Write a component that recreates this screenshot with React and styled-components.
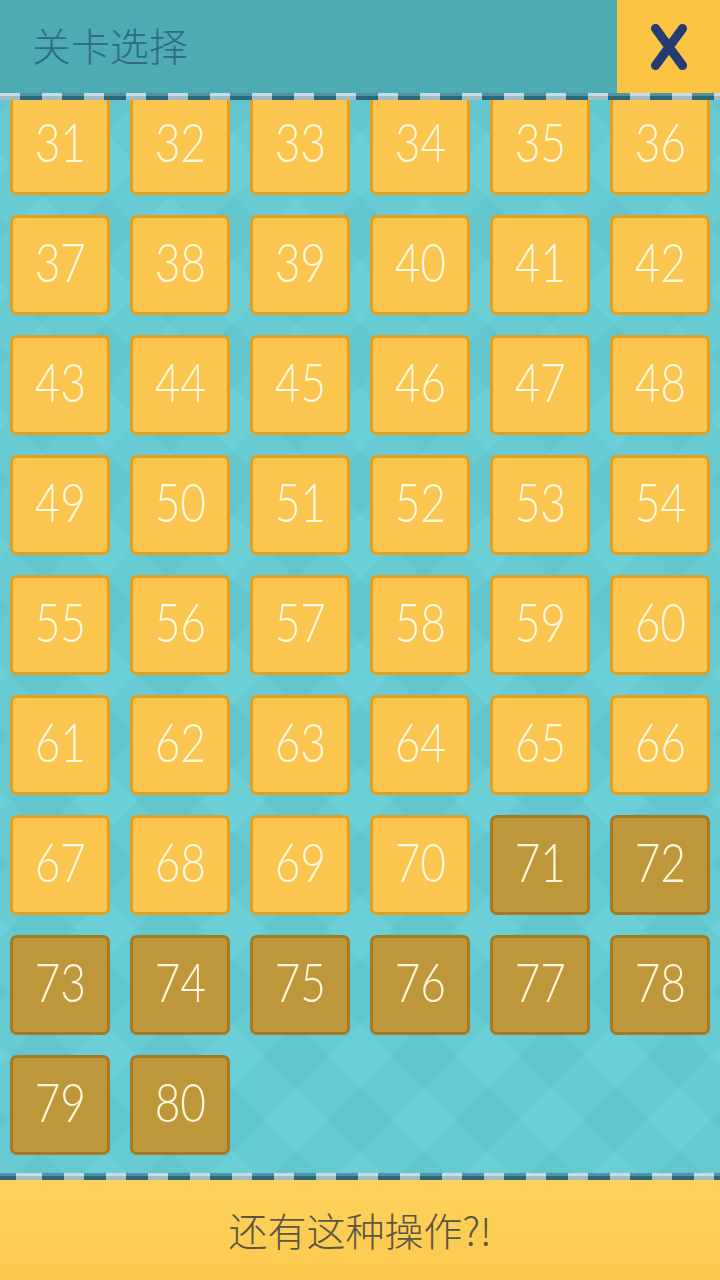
import React, { useLayoutEffect, useRef } from 'react';
import styled, { createGlobalStyle } from 'styled-components';

const GlobalStyle = createGlobalStyle`
  html, body {
    margin: 0;
    padding: 0;
    background: #6bcfd7;
  }
  * { box-sizing: border-box; }
`;

const Screen = styled.div`
  width: 720px;
  height: 1280px;
  display: flex;
  flex-direction: column;
  overflow: hidden;
  background-color: #6bcfd7;
  font-family: "Noto Sans CJK SC", "Noto Sans", sans-serif;
`;

const Header = styled.div`
  height: 93px;
  flex: none;
  display: flex;
  align-items: stretch;
  background: #4cabb3;
`;

const Title = styled.h1`
  flex: 1;
  margin: 0;
  padding: 0 0 6px 32px;
  display: flex;
  align-items: center;
  font-size: 39px;
  font-weight: 300;
  color: #2f6b85;
`;

const CloseBtn = styled.button`
  width: 103px;
  border: none;
  padding: 0 0 0 1px;
  background: #fcc443;
  display: flex;
  align-items: center;
  justify-content: center;
  cursor: pointer;
`;

const DashRule = styled.div`
  height: 7px;
  flex: none;
  background:
    linear-gradient(to bottom, rgba(255,255,255,0.18) 0 3px, rgba(0,0,0,0.12) 3px 7px),
    repeating-linear-gradient(to right, #b9d6de 0 20px, #2f7890 20px 42px);
  background-position: ${p => p.$offset || 0}px 0;
`;

const Scroller = styled.div`
  flex: 1;
  overflow: hidden;
  background-color: #6bcfd7;
  background-image:
    repeating-linear-gradient(45deg, rgba(40,140,150,0.07) 0 45px, transparent 45px 90px),
    repeating-linear-gradient(-45deg, rgba(40,140,150,0.07) 0 45px, transparent 45px 90px);
`;

const Grid = styled.div`
  display: grid;
  grid-template-columns: repeat(6, 100px);
  grid-auto-rows: 100px;
  gap: 20px;
  padding: 15px 10px 18px;
`;

const Tile = styled.button`
  border-radius: 7px;
  border: 3px solid ${p => (p.$locked ? '#a57a22' : '#e39f1f')};
  background: ${p => (p.$locked ? '#bd973a' : '#fbc64f')};
  padding: 0 0 7px;
  display: flex;
  align-items: center;
  justify-content: center;
  cursor: pointer;
`;

const Num = styled.span`
  font-family: Lato, Roboto, "Liberation Sans", sans-serif;
  font-weight: 300;
  font-size: 54px;
  line-height: 1;
  color: #fff7df;
  display: inline-block;
  transform: scaleX(0.82);
`;

const Footer = styled.div`
  height: 100px;
  flex: none;
  display: flex;
  align-items: center;
  justify-content: center;
  padding-bottom: 2px;
  background: linear-gradient(to bottom, #fdd25c, #fcc94d);
  font-size: 39px;
  font-weight: 300;
  color: #5c5546;
`;

const XIcon = () => (
  <svg width="36" height="46" viewBox="0 0 36 46">
    <path d="M4.5 4.5 L31.5 41.5 M31.5 4.5 L4.5 41.5" stroke="#233d73" strokeWidth="9" strokeLinecap="round" fill="none" />
  </svg>
);

const UNLOCKED = 70;
// only the page of levels that is shown in the list
const levels = Array.from({ length: 50 }, (_, i) => i + 31);

export default function App() {
  const ref = useRef(null);

  useLayoutEffect(() => {
    if (ref.current) ref.current.scrollTop = ref.current.scrollHeight;
  }, []);

  return (
    <Screen>
      <GlobalStyle />
      <Header>
        <Title>关卡选择</Title>
        <CloseBtn aria-label="close"><XIcon /></CloseBtn>
      </Header>
      <DashRule $offset={0} />
      <Scroller ref={ref}>
        <Grid>
          {levels.map(n => (
            <Tile key={n} $locked={n > UNLOCKED}>
              <Num>{n}</Num>
            </Tile>
          ))}
        </Grid>
      </Scroller>
      <DashRule $offset={22} />
      <Footer>还有这种操作?!</Footer>
    </Screen>
  );
}
